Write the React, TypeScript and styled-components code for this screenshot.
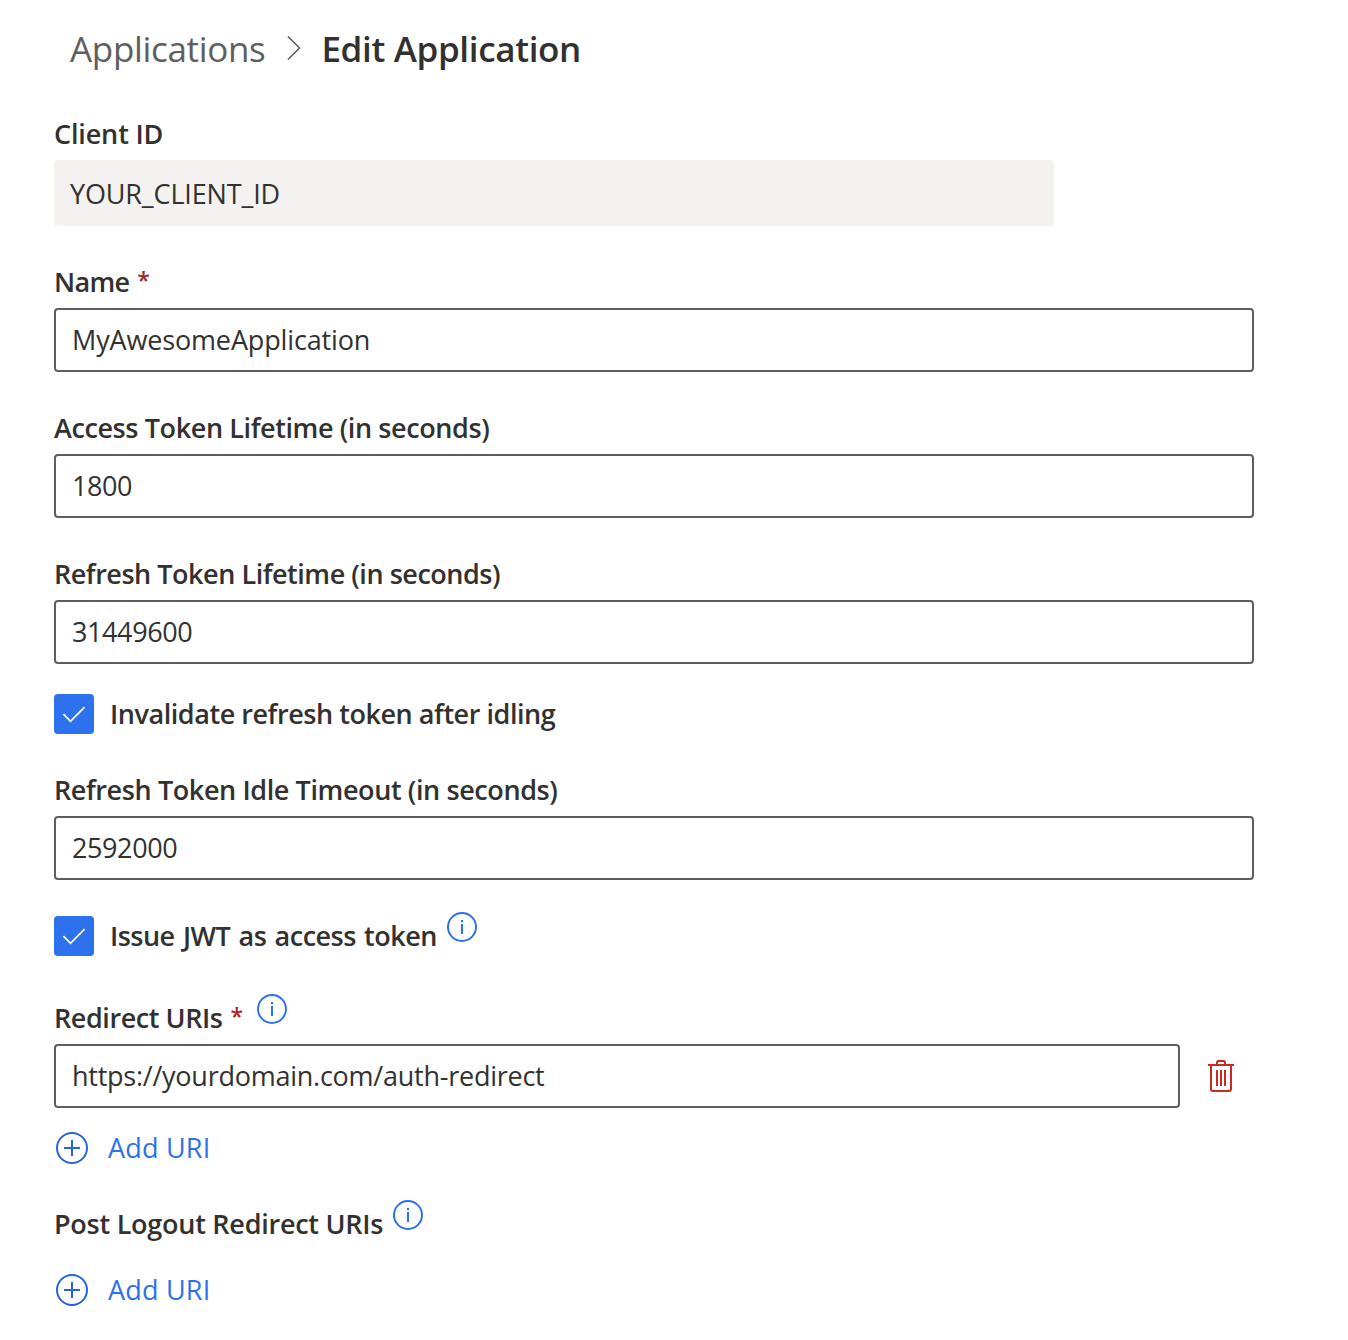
import React from "react";
import styled, { createGlobalStyle } from "styled-components";

const blue = "#2d71ee";

const Global = createGlobalStyle`
  * { box-sizing: border-box; }
  body {
    margin: 0;
    background: #fff;
    color: #323130;
    font-family: "Open Sans", "Noto Sans", sans-serif;
    font-size: 27px;
  }
`;

const Page = styled.main`
  height: 1340px;
  padding: 24px 94px 0 54px;
  display: flex;
  flex-direction: column;
  overflow: hidden;
`;

const Breadcrumb = styled.nav`
  display: flex;
  align-items: center;
  height: 50px;
  margin: 0 0 34px 16px;
  font-size: 35px;
  line-height: 50px;
  color: #605e5c;
`;

const Separator = styled.svg`
  width: 14px;
  height: 26px;
  margin: 0 20px 2px 22px;
`;

const Current = styled.strong`
  font-weight: 600;
  color: #323130;
`;

const Text = styled.span<{ $spacing: number; $words?: number }>`
  letter-spacing: ${(p) => p.$spacing}px;
  word-spacing: ${(p) => p.$words ?? 0}px;
  white-space: nowrap;
`;

const Field = styled.section<{ $gap?: number }>`
  margin-top: ${(p) => p.$gap ?? 30}px;
  display: flex;
  flex-direction: column;
`;

const Label = styled.div`
  display: flex;
  align-items: center;
  height: 52px;
  line-height: 52px;
  font-weight: 600;
`;

const Required = styled.span`
  width: 12px;
  margin-left: 8px;
  padding-bottom: 4px;
  color: #a4262c;
  font-size: 23px;
  line-height: 48px;
`;

const ReadOnlyValue = styled.div`
  width: 1000px;
  height: 66px;
  padding-left: 16px;
  border-radius: 4px;
  background: #f3f2f1;
  line-height: 68px;
`;

const Input = styled.div`
  flex: 1;
  height: 64px;
  padding-left: 16px;
  border: 2px solid #605e5c;
  border-radius: 4px;
  line-height: 59px;
`;

const Row = styled.div`
  display: flex;
  align-items: center;
`;

const CheckRow = styled.div<{ $gap: number }>`
  display: flex;
  align-items: center;
  gap: 16px;
  height: 40px;
  margin-top: ${(p) => p.$gap}px;
  line-height: 38px;
  font-weight: 600;
`;

const CheckBox = styled.span`
  display: flex;
  width: 40px;
  height: 40px;
  border-radius: 4px;
  background: ${blue};
`;

const CheckLabel = styled.div`
  display: flex;
  align-items: center;
  height: 40px;
`;

const InfoSvg = styled.svg<{ $left: number }>`
  width: 30px;
  height: 30px;
  flex: none;
  margin: 0 0 18px ${(p) => p.$left}px;
`;

const DeleteButton = styled.span`
  display: flex;
  width: 26px;
  height: 32px;
  margin: 0 20px 0 28px;
`;

const AddButton = styled.div<{ $gap: number }>`
  display: flex;
  align-items: center;
  gap: 20px;
  height: 32px;
  margin-top: ${(p) => p.$gap}px;
  padding-left: 2px;
  line-height: 30px;
  color: ${blue};
`;

function Info({ left }: { left: number }) {
  return (
    <InfoSvg $left={left} viewBox="0 0 30 30" fill="none" stroke={blue} strokeWidth="2">
      <circle cx="15" cy="15" r="14" />
      <path d="M15 12v10M15 8v2.2" />
    </InfoSvg>
  );
}

function Check() {
  return (
    <CheckBox>
      <svg width="40" height="40" viewBox="0 0 40 40" fill="none" stroke="#fff" strokeWidth="1.8">
        <path d="M9.4 20.2 16.5 27.3 30.6 13.2" />
      </svg>
    </CheckBox>
  );
}

function Add({ gap }: { gap: number }) {
  return (
    <AddButton $gap={gap}>
      <svg width="32" height="32" viewBox="0 0 32 32" fill="none" stroke="#2764dc" strokeWidth="2">
        <circle cx="16" cy="16" r="15" />
        <path d="M8 16h16M16 8v16" />
      </svg>
      <Text $spacing={0.2}>Add URI</Text>
    </AddButton>
  );
}

interface TextFieldProps {
  label: string;
  value: string;
  labelSpacing: number;
  valueSpacing: number;
  required?: boolean;
}

function TextField({ label, value, labelSpacing, valueSpacing, required }: TextFieldProps) {
  return (
    <Field>
      <Label>
        <Text $spacing={labelSpacing}>{label}</Text>
        {required && <Required>*</Required>}
      </Label>
      <Row>
        <Input><Text $spacing={valueSpacing}>{value}</Text></Input>
      </Row>
    </Field>
  );
}

export default function App() {
  return (
    <>
      <Global />
      <Page>
        <Breadcrumb>
          <Text $spacing={-0.33}>Applications</Text>
          <Separator viewBox="0 0 14 26" fill="none" stroke="#605e5c" strokeWidth="1.6">
            <path d="M1 1.5 12.5 13 1 24.5" />
          </Separator>
          <Current><Text $spacing={-0.35}>Edit Application</Text></Current>
        </Breadcrumb>

        <Field $gap={0}>
          <Label><Text $spacing={-0.15}>Client ID</Text></Label>
          <ReadOnlyValue><Text $spacing={-0.15}>YOUR_CLIENT_ID</Text></ReadOnlyValue>
        </Field>

        <TextField label="Name" value="MyAwesomeApplication" labelSpacing={-0.7} valueSpacing={-0.15} required />
        <TextField label="Access Token Lifetime (in seconds)" value="1800" labelSpacing={-0.4} valueSpacing={-0.4} />
        <TextField label="Refresh Token Lifetime (in seconds)" value="31449600" labelSpacing={-0.47} valueSpacing={-0.4} />

        <CheckRow $gap={30}>
          <Check />
          <CheckLabel>
            <Text $spacing={-0.45}>Invalidate refresh token after idling</Text>
          </CheckLabel>
        </CheckRow>

        <TextField label="Refresh Token Idle Timeout (in seconds)" value="2592000" labelSpacing={-0.4} valueSpacing={-0.4} />

        <CheckRow $gap={36}>
          <Check />
          <CheckLabel>
            <Text $spacing={-0.52} $words={1.8}>Issue JWT as access token</Text>
            <Info left={10} />
          </CheckLabel>
        </CheckRow>

        <Field $gap={36}>
          <Label>
            <Text $spacing={-0.43}>Redirect URIs</Text>
            <Required>*</Required>
            <Info left={14} />
          </Label>
          <Row>
            <Input><Text $spacing={-0.25}>https://yourdomain.com/auth-redirect</Text></Input>
            <DeleteButton>
              <svg width="26" height="32" viewBox="0 0 26 32" fill="none" stroke="#cb2a20" strokeWidth="2">
                <path d="M0 5h26M9 5V2.5Q9 1 10.5 1h5Q17 1 17 2.5V5M3 5v24q0 2 2 2h16q2 0 2-2V5M9 10v16M13 10v16M17 10v16" />
              </svg>
            </DeleteButton>
          </Row>
        </Field>
        <Add gap={24} />

        <Field $gap={34}>
          <Label>
            <Text $spacing={-0.25}>Post Logout Redirect URIs</Text>
            <Info left={10} />
          </Label>
        </Field>
        <Add gap={24} />
      </Page>
    </>
  );
}
